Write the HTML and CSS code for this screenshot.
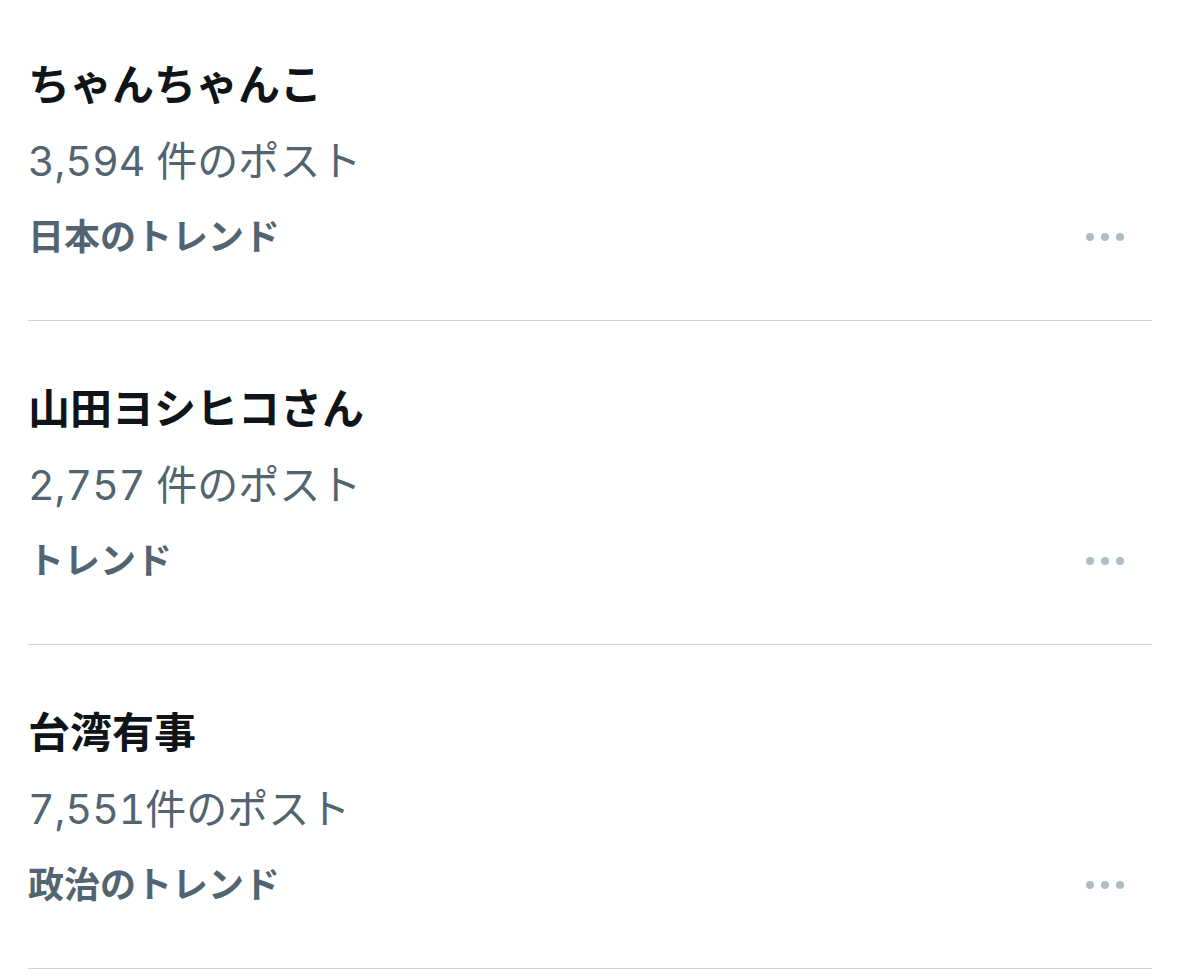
FILE: index.html
```html
<!DOCTYPE html>
<html lang="ja">
<head>
<meta charset="utf-8">
<link rel="stylesheet" href="styles.css">
</head>
<body>
<main class="trends">
  <section class="trend">
    <div class="info">
      <div class="title">ちゃんちゃんこ</div>
      <div class="count">3,594 件のポスト</div>
      <div class="category">日本のトレンド</div>
    </div>
    <div class="more"><span></span><span></span><span></span></div>
  </section>
  <section class="trend">
    <div class="info">
      <div class="title">山田ヨシヒコさん</div>
      <div class="count">2,757 件のポスト</div>
      <div class="category">トレンド</div>
    </div>
    <div class="more"><span></span><span></span><span></span></div>
  </section>
  <section class="trend">
    <div class="info">
      <div class="title">台湾有事</div>
      <div class="count">7,551件のポスト</div>
      <div class="category">政治のトレンド</div>
    </div>
    <div class="more"><span></span><span></span><span></span></div>
  </section>
</main>
</body>
</html>
```

FILE: styles.css
```css
html, body {
  margin: 0;
  padding: 0;
  background: #ffffff;
}
body {
  font-family: "Inter", "Noto Sans CJK JP", sans-serif;
}
.trends {
  padding: 0 26px 0 28px;
}
.trend {
  display: flex;
  justify-content: space-between;
  align-items: flex-end;
  padding: 50px 0 45px;
  border-bottom: 1px solid #cfd3d6;
}
.trend:first-child {
  padding-top: 47px;
}
.info {
  display: flex;
  flex-direction: column;
}
.title {
  font-size: 42px;
  line-height: 76px;
  font-weight: 700;
  color: #0f1419;
}
.count {
  font-size: 41px;
  line-height: 76px;
  color: #536471;
  font-variant-numeric: tabular-nums;
}
.category {
  font-size: 36px;
  line-height: 76px;
  font-weight: 700;
  color: #536471;
}
.more {
  display: flex;
  align-items: center;
  gap: 7px;
  height: 76px;
  padding-right: 28px;
}
.more span {
  width: 8px;
  height: 8px;
  border-radius: 50%;
  background: #aebcc5;
}
```
